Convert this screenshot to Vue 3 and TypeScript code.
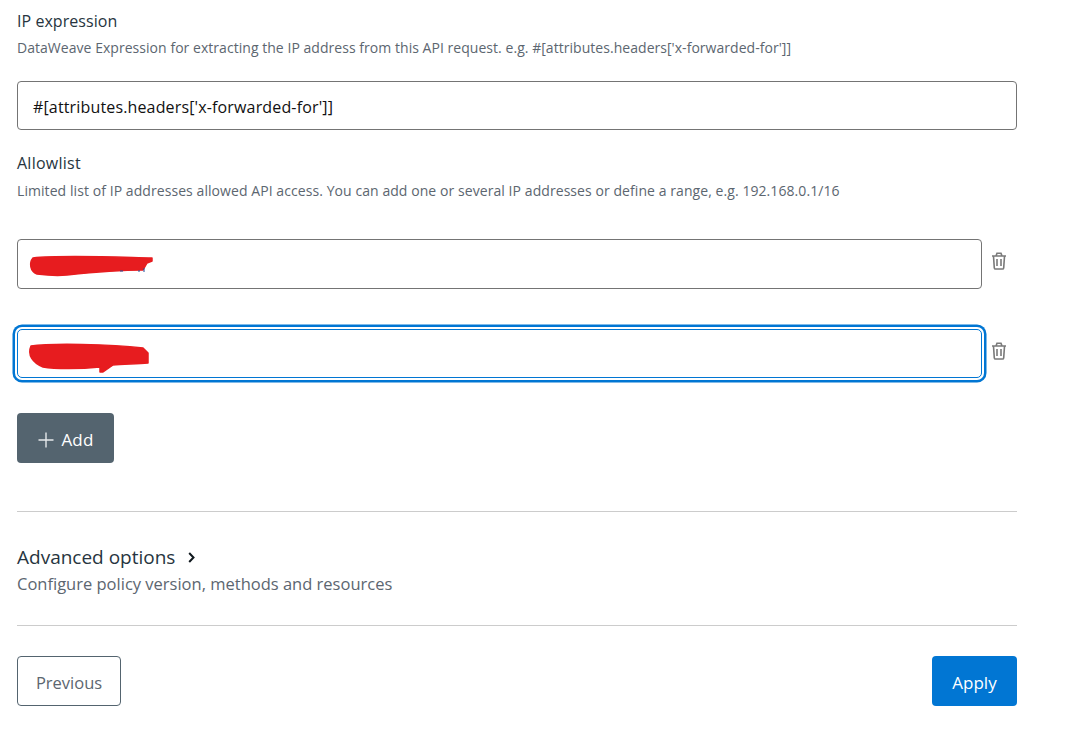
<script setup lang="ts">
const rows = [
  { focused: false, d: 'M33 258 C60 255 110 257 152 258 L152 261 L147 263 L143 270 C125 270 95 272 67 275 C55 276 45 275 37 274 C30 271 29 263 33 258 Z' },
  { focused: true, d: 'M31 346 C50 343 110 344 143 348 L148 353 L148 363 C135 364 122 364 113 365 L103 372 L100 372 L100 367 C80 369 55 369 43 367 C33 363 27 355 31 346 Z' },
];
</script>

<template>
  <main class="page">
    <section class="ip">
      <h3 class="label">IP expression</h3>
      <p class="hint">DataWeave Expression for extracting the IP address from this API request. e.g. #[attributes.headers['x-forwarded-for']]</p>
      <div class="field">#[attributes.headers['x-forwarded-for']]</div>
    </section>

    <section class="allow">
      <h3 class="label">Allowlist</h3>
      <p class="hint">Limited list of IP addresses allowed API access. You can add one or several IP addresses or define a range, e.g. 192.168.0.1/16</p>
      <div class="rows">
        <div v-for="(r, i) in rows" :key="i" class="row">
          <div class="field" :class="{ focused: r.focused }"></div>
          <svg class="trash" width="16" height="18" viewBox="0 0 16 18" fill="none" stroke="#7a7a7a" stroke-width="1.6">
            <path d="M1 4h14M5.2 3.6 6 1.2h4l.8 2.4M2.5 4.2l.8 11.6c.1.8.5 1.2 1.2 1.2h7c.7 0 1.1-.4 1.2-1.2l.8-11.6" />
            <path d="M6 7v7M10 7v7" />
          </svg>
        </div>
      </div>
      <button class="btn add"><svg width="16" height="16" viewBox="0 0 16 16" stroke="#e6e9eb" stroke-width="1.4"><path d="M8 .5v15M.5 8h15" /></svg>Add</button>
    </section>

    <hr class="rule first" />
    <section class="advanced">
      <div class="adv-title">Advanced options
        <svg width="7" height="11" viewBox="0 0 7 11" fill="none" stroke="#10181e" stroke-width="2"><path d="M1.2 1 5.5 5.5 1.2 10" /></svg>
      </div>
      <p class="adv-sub">Configure policy version, methods and resources</p>
    </section>
    <hr class="rule" />

    <footer class="actions">
      <button class="btn prev">Previous</button>
      <button class="btn apply">Apply</button>
    </footer>

    <svg class="scribbles" width="1080" height="730" viewBox="0 0 1080 730" fill="#e71c1f" stroke="#e71c1f" stroke-width="1.5" stroke-linejoin="round">
      <path v-for="(r, i) in rows" :key="i" :d="r.d" />
      <path d="M120 271h3M139 270v2M144 268v4" fill="none" stroke="#1d4f9c" stroke-width="1" />
    </svg>
  </main>
</template>

<style scoped>
.page {
  position: relative;
  box-sizing: border-box;
  width: 1080px;
  height: 730px;
  padding: 9px 63px 0 17px;
  background: #fff;
  font-family: "Open Sans", "Noto Sans", sans-serif;
  color: #273540;
  overflow: hidden;
}
.label {
  margin: 0;
  font-size: 16px;
  font-weight: 400;
  line-height: 24px;
  letter-spacing: 0.05px;
}
.allow .label { letter-spacing: 0.25px; }
.hint {
  margin: 5px 0 0;
  font-size: 14px;
  line-height: 20px;
  color: #5c6670;
  letter-spacing: 0.04px;
  white-space: nowrap;
}
.allow .hint { margin-top: 6px; letter-spacing: 0.07px; }
.field {
  box-sizing: border-box;
  height: 49px;
  border: 1px solid #747474;
  border-radius: 4px;
  background: #fff;
  padding: 0 15px;
  line-height: 50px;
  font-size: 16px;
  color: #111;
  letter-spacing: 0.15px;
}
.ip .field { margin-top: 23px; }
.allow { margin-top: 21px; }
.rows { margin-top: 38px; display: flex; flex-direction: column; gap: 40px; }
.row { display: flex; align-items: flex-start; gap: 9px; }
.row .field { width: 965px; flex: none; height: 50px; }
.row .field.focused { height: 49px; border-color: #0176d3; border-radius: 5px; box-shadow: 0 0 0 2px #fff, 0 0 0 4.5px #0176d3; }
.trash { margin-top: 13px; }
.btn {
  box-sizing: border-box;
  height: 50px;
  padding: 3px 0 0;
  border-radius: 4px;
  font-family: inherit;
  font-size: 17px;
  cursor: pointer;
}
.add {
  margin-top: 35px;
  width: 97px;
  display: flex;
  align-items: center;
  justify-content: center;
  gap: 7px;
  border: 0;
  background: #54646f;
  color: #fff;
  padding-left: 1px;
  letter-spacing: 0.2px;
}
.rule { margin: 0; border: 0; height: 1px; background: #cccccc; }
.rule.first { margin-top: 48px; }
.advanced { height: 113px; box-sizing: border-box; padding-top: 33px; }
.adv-title { display: flex; align-items: center; gap: 13px; font-size: 19px; line-height: 24px; color: #273540; }
.adv-sub { margin: 3px 0 0; font-size: 16.5px; line-height: 24px; color: #5c6670; }
.actions { margin-top: 30px; display: flex; justify-content: space-between; }
.prev { width: 104px; background: #fff; border: 1px solid #54646f; color: #5c6670; font-size: 16.5px; }
.apply { width: 85px; background: #0176d3; border: 0; color: #fff; }
.scribbles { position: absolute; left: 0; top: 0; pointer-events: none; }
</style>

<style>
html, body { margin: 0; background: #fff; }
</style>
